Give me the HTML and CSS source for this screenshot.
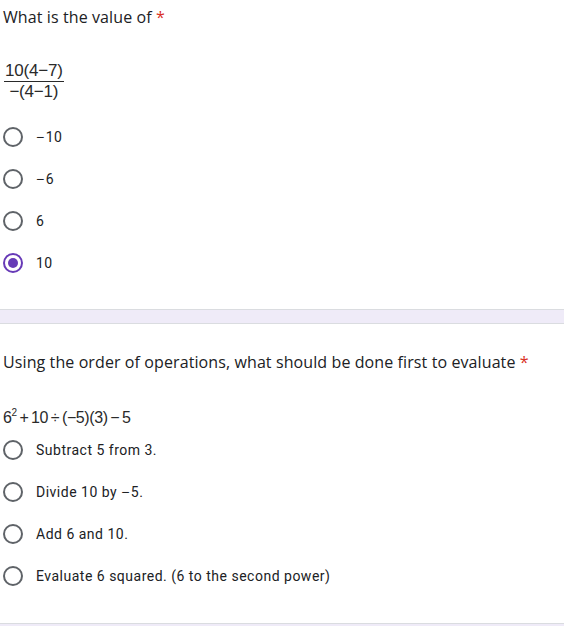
FILE: index.html
```html
<!DOCTYPE html>
<html>
<head>
<meta charset="utf-8">
<link rel="stylesheet" href="styles.css">
</head>
<body>
<div class="q">
  <div class="title">What is the value of <span class="req">*</span></div>
  <div class="math frac">
    <span class="num">10(4−7)</span>
    <span class="den">−(4−1)</span>
  </div>
  <div class="opts opts1">
    <div class="opt"><span class="radio"></span><span class="lbl"><span class="minus">−</span>10</span></div>
    <div class="opt"><span class="radio"></span><span class="lbl"><span class="minus">−</span>6</span></div>
    <div class="opt"><span class="radio"></span><span class="lbl">6</span></div>
    <div class="opt"><span class="radio on"></span><span class="lbl">10</span></div>
  </div>
</div>
<div class="band"></div>
<div class="q q2">
  <div class="title">Using the order of operations, what should be done first to evaluate <span class="req">*</span></div>
  <div class="math expr">6<sup>2</sup> + 10 ÷ (−5)(3) − 5</div>
  <div class="opts opts2">
    <div class="opt"><span class="radio"></span><span class="lbl">Subtract 5 from 3.</span></div>
    <div class="opt"><span class="radio"></span><span class="lbl">Divide 10 by <span class="minus">−</span>5.</span></div>
    <div class="opt"><span class="radio"></span><span class="lbl">Add 6 and 10.</span></div>
    <div class="opt"><span class="radio"></span><span class="lbl">Evaluate 6 squared. (6 to the second power)</span></div>
  </div>
</div>
<div class="band bottom"></div>
</body>
</html>
```
FILE: styles.css
```css
html, body {
  margin: 0;
  padding: 0;
  background: #fff;
  height: 626px;
  overflow: hidden;
}
body {
  font-family: Roboto, "Liberation Sans", sans-serif;
  color: #202124;
}
.q {
  padding-left: 3px;
}
.title {
  font-family: "Open Sans", Roboto, sans-serif;
  font-size: 16px;
  line-height: 24px;
  letter-spacing: 0.1px;
  padding-top: 5px;
  color: #202124;
}
.req {
  color: #d93025;
}
.math {
  font-family: "Liberation Sans", Arial, sans-serif;
  color: #2a2a2a;
}
.frac {
  display: inline-flex;
  flex-direction: column;
  align-items: center;
  margin-top: 33px;
  margin-left: 1px;
  font-size: 17px;
  line-height: 18px;
  letter-spacing: -0.2px;
}
.num {
  border-bottom: 1px solid #2a2a2a;
  padding: 0 1px 1px;
}
.den {
  padding-top: 1px;
}
.opts {
  display: flex;
  flex-direction: column;
  margin-left: -3px;
}
.opts1 {
  margin-top: 15px;
}
.opt {
  display: flex;
  align-items: center;
  height: 42px;
}
.radio {
  box-sizing: border-box;
  width: 20px;
  height: 20px;
  border: 2px solid #5f6368;
  border-radius: 50%;
  margin-left: 3px;
  margin-right: 13px;
  display: flex;
  align-items: center;
  justify-content: center;
  flex: none;
}
.radio.on {
  border-color: #673ab7;
}
.radio.on::after {
  content: "";
  width: 10px;
  height: 10px;
  border-radius: 50%;
  background: #673ab7;
}
.lbl {
  font-size: 14px;
  letter-spacing: 0.5px;
  color: #202124;
}
.minus {
  font-family: "Liberation Sans", Arial, sans-serif;
  padding-right: 1px;
}
.band {
  height: 13px;
  margin-top: 25px;
  background: #efebf8;
  border-top: 1px solid #dadce0;
  border-bottom: 1px solid #dadce0;
}
.q2 .title {
  padding-top: 26px;
}
.expr {
  font-size: 16px;
  line-height: 20px;
  margin-top: 34px;
  letter-spacing: -0.4px;
  word-spacing: -1.3px;
}
.expr sup {
  font-size: 10px;
  vertical-align: 7px;
  line-height: 0;
}
.opts2 {
  margin-top: 1px;
}
.band.bottom {
  margin-top: 26px;
}
```
